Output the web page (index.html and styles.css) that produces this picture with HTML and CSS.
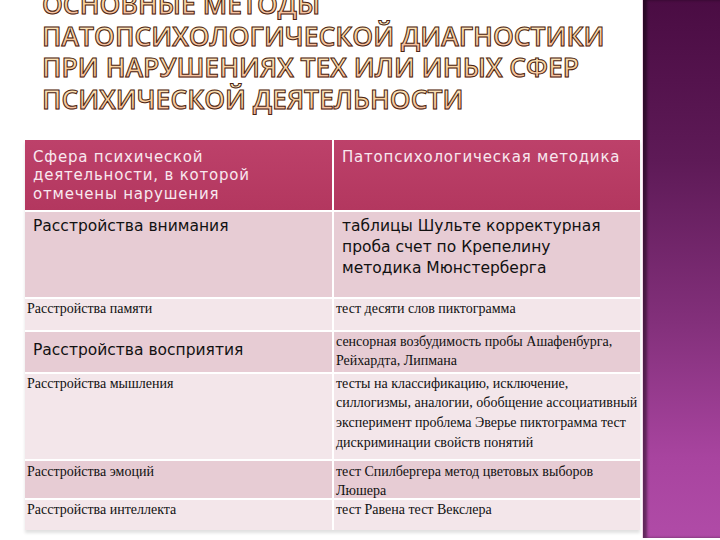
FILE: index.html
```html
<!DOCTYPE html>
<html lang="ru">
<head>
<meta charset="utf-8">
<link rel="stylesheet" href="styles.css">
</head>
<body>
<div class="slide">
  <div class="main">
    <h1 class="title">
      <span class="tl">ОСНОВНЫЕ МЕТОДЫ</span>
      <span class="tl">ПАТОПСИХОЛОГИЧЕСКОЙ ДИАГНОСТИКИ</span>
      <span class="tl">ПРИ НАРУШЕНИЯХ ТЕХ ИЛИ ИНЫХ СФЕР</span>
      <span class="tl">ПСИХИЧЕСКОЙ ДЕЯТЕЛЬНОСТИ</span>
    </h1>
    <div class="tbl">
      <div class="cell head">Сфера психической деятельности, в которой отмечены нарушения</div>
      <div class="cell head">Патопсихологическая методика</div>

      <div class="cell dark sans r1">Расстройства внимания</div>
      <div class="cell dark sans r1 narrow">таблицы Шульте корректурная проба счет по Крепелину методика Мюнстерберга</div>

      <div class="cell light serif r2">Расстройства памяти</div>
      <div class="cell light serif r2">тест десяти слов пиктограмма</div>

      <div class="cell dark sans r3">Расстройства восприятия</div>
      <div class="cell dark serif r3">сенсорная возбудимость пробы Ашафенбурга, Рейхардта, Липмана</div>

      <div class="cell light serif r4">Расстройства мышления</div>
      <div class="cell light serif r4">тесты на классификацию, исключение, силлогизмы, аналогии, обобщение ассоциативный эксперимент проблема Эверье пиктограмма тест дискриминации свойств понятий</div>

      <div class="cell dark serif r5">Расстройства эмоций</div>
      <div class="cell dark serif r5">тест Спилбергера метод цветовых выборов Люшера</div>

      <div class="cell light serif r6">Расстройства интеллекта</div>
      <div class="cell light serif r6">тест Равена тест Векслера</div>
    </div>
  </div>
  <div class="band"></div>
</div>
</body>
</html>
```
FILE: styles.css
```css
html, body {
  margin: 0;
  padding: 0;
  background: #ffffff;
}
body {
  width: 720px;
  height: 540px;
  overflow: hidden;
}
.slide {
  display: flex;
  width: 720px;
  height: 540px;
}
.main {
  width: 643px;
  padding-left: 25px;
  box-sizing: border-box;
}
.title {
  margin: -11px 0 0 17px;
  font-family: "Open Sans", sans-serif;
  font-weight: 600;
  font-size: 26.5px;
  line-height: 31.7px;
  letter-spacing: 0;
}
.tl {
  display: block;
  width: max-content;
  color: transparent;
  background: linear-gradient(to bottom, #fff1c8 0%, #fad19c 50%, #f4b2a2 100%);
  -webkit-background-clip: text;
  background-clip: text;
  -webkit-text-stroke: 1px #4a2414;
}
.tbl {
  margin-top: 24px;
  width: 615px;
  display: grid;
  grid-template-columns: 307px 306px;
  column-gap: 2px;
  row-gap: 2px;
  background: #ffffff;
  box-shadow: 0 3px 3px rgba(0,0,0,0.12);
}
.cell {
  box-sizing: border-box;
  color: #111;
}
.head {
  height: 70px;
  background: linear-gradient(to bottom, #bd416a, #b3375f);
  color: #f8e8ef;
  font-family: "DejaVu Sans", sans-serif;
  font-size: 15px;
  letter-spacing: 0.8px;
  line-height: 18.5px;
  padding: 8px 8px 0 8px;
}
.dark { background: #e7ccd4; }
.light { background: #f3e6ea; }
.sans {
  font-family: "DejaVu Sans", sans-serif;
  font-size: 15.5px;
  line-height: 21px;
  padding: 4px 8px 0 8px;
}
.narrow {
  padding-right: 18px;
}
.serif {
  font-family: "Liberation Serif", serif;
  font-size: 14px;
  line-height: 19.6px;
  padding: 0 0 0 2px;
}
.r3.sans {
  padding-top: 8px;
}
.r1 { height: 85px; }
.r2 { height: 31px; }
.r3 { height: 40px; }
.r4 { height: 85px; }
.r5 { height: 37px; line-height: 19px; padding-top: 1px; }
.r6 { height: 30px; }
.band {
  width: 77px;
  height: 538px;
  background: linear-gradient(to bottom, #4a0c43 0%, #5e1a57 30%, #83307b 60%, #a8449f 85%, #b04ba7 100%);
  box-shadow: inset 4px 0 3px rgba(0,0,0,0.45);
  border-left: 1px solid #f1d6e8;
}
```
